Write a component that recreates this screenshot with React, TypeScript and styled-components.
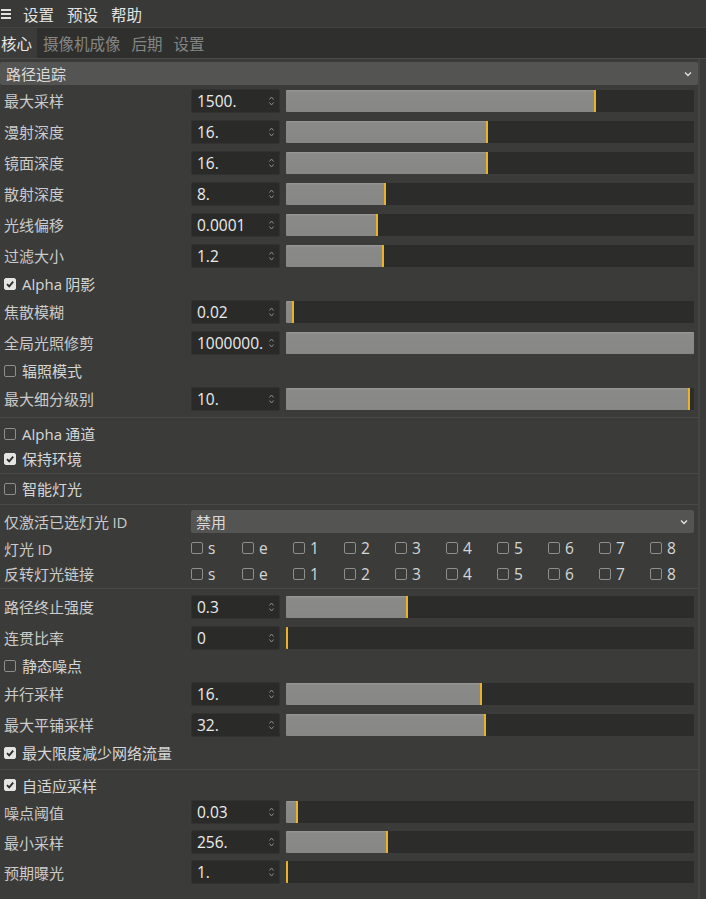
import React from 'react';
import styled, {createGlobalStyle} from 'styled-components';

const GlobalStyle = createGlobalStyle`
    html, body {
        margin: 0;
        padding: 0;
        background: #3b3c3a;
    }
    body {
        font-family: "Noto Sans CJK SC", "Noto Sans", sans-serif;
        color: #d2d2d2;
    }
`

const Page = styled.div`
    width: 706px;
    height: 899px;
    overflow: hidden;
    background: #3b3c3a;
`

const MenuBar = styled.div`
    height: 27px;
    display: flex;
    align-items: center;
    gap: 13px;
    padding-left: 1px;
    background: #393a38;
    font-size: 15.5px;
    color: #e2e2e2;
`

const Burger = styled.span`
    display: flex;
    flex-direction: column;
    gap: 2px;
    width: 10px;
    margin-right: -1px;
    & > i {
        display: block;
        height: 2px;
        background: #e2e2e2;
    }
`

const TabBar = styled.div`
    height: 30px;
    display: flex;
    align-items: stretch;
    background: #2f302e;
    border-top: 1px solid #444543;
    border-bottom: 1px solid #4b4c4a;
`

const Tab = styled.div<{ $active?: boolean }>`
    display: flex;
    align-items: center;
    padding: 0 5px 0 ${p => p.$active ? '1px' : '6px'};
    font-size: 15.5px;
    color: ${p => p.$active ? '#e8e8e8' : '#858684'};
    background: ${p => p.$active ? '#3b3c3a' : 'transparent'};
`

const Panel = styled.div`
    padding: 3px 0 0 0;
    margin-right: 6px;
    border-right: 2px solid #454644;
    height: 840px;
`

const Row = styled.div<{ $h?: number }>`
    display: grid;
    grid-template-columns: 185px 89px 1fr;
    column-gap: 6px;
    align-items: center;
    height: ${p => p.$h || 31}px;
    padding-right: 4px;
`

const Label = styled.div`
    padding-left: 4px;
    font-size: 15px;
    color: #cbcbcb;
    white-space: nowrap;
`

const Field = styled.div`
    height: 24px;
    display: flex;
    align-items: center;
    justify-content: space-between;
    background: #2a2b29;
    border: 1px solid #323331;
    border-radius: 2px;
    box-sizing: border-box;
    padding: 0 4px 0 5px;
    font-family: "Open Sans", "Noto Sans", sans-serif;
    font-size: 15.5px;
    color: #ececec;
`

const Spin = styled.svg`
    width: 7px;
    height: 12px;
    flex: none;
`

const Track = styled.div`
    height: 22px;
    background: #2c2d2b;
    border-radius: 1px;
    overflow: hidden;
    display: flex;
`

const Fill = styled.div<{ $mark: boolean }>`
    height: 100%;
    background: linear-gradient(#9a9a9a 0, #8a8a89 2px, #878786 100%);
    border-right: ${p => p.$mark ? '2px solid #e8b326' : 'none'};
    box-sizing: border-box;
`

const Sep = styled.div<{ $h?: number }>`
    height: ${p => p.$h || 7}px;
    display: flex;
    align-items: center;
    &::after {
        content: "";
        flex: 1;
        height: 1px;
        background: #4a4b49;
    }
`

const CheckRow = styled.div<{ $h?: number }>`
    height: ${p => p.$h || 25}px;
    display: flex;
    align-items: center;
    gap: 6px;
    padding-left: 4px;
    font-size: 15px;
    color: #d6d6d6;
`

const Box = styled.span<{ $on?: boolean }>`
    width: 12px;
    height: 12px;
    box-sizing: border-box;
    border-radius: 2px;
    flex: none;
    border: 1px solid ${p => p.$on ? '#e4e4e4' : '#8e8e8d'};
    background: ${p => p.$on ? '#e4e4e4' : 'transparent'};
    display: flex;
    align-items: center;
    justify-content: center;
`

const Latin = styled.span`
    font-family: "Open Sans", "Noto Sans", sans-serif;
`

const Select = styled.div<{ $full?: boolean }>`
    height: 23px;
    display: flex;
    align-items: center;
    justify-content: space-between;
    background: #545553;
    border-radius: 2px;
    padding: 0 6px 0 ${p => p.$full ? '6px' : '5px'};
    font-size: 15px;
    color: #dadada;
`

const SelectRow = styled.div<{ $h?: number }>`
    display: grid;
    grid-template-columns: 191px 1fr;
    align-items: center;
    height: ${p => p.$h || 26}px;
    padding-right: 4px;
`

const IdGrid = styled.div`
    display: grid;
    grid-template-columns: repeat(10, 51px);
    font-family: "Open Sans", "Noto Sans", sans-serif;
    font-size: 15.5px;
    color: #d6d6d6;
`

const IdItem = styled.div`
    display: flex;
    align-items: center;
    gap: 5px;
`

const Chevron = () => (
    <svg width="8" height="6" viewBox="0 0 8 6">
        <path d="M1 1.5 L4 4.5 L7 1.5" fill="none" stroke="#e0e0e0" strokeWidth="1.4"/>
    </svg>
)

const Tick = () => (
    <svg width="10" height="10" viewBox="0 0 10 10">
        <path d="M2 5.2 L4.2 7.4 L8.2 2.6" fill="none" stroke="#2b2c2a" strokeWidth="1.8"/>
    </svg>
)

const Slider = ({label, value, pct, mark = true, h}: {
    label: string, value: string, pct: number, mark?: boolean, h?: number
}) => (
    <Row $h={h}>
        <Label>{label}</Label>
        <Field>
            {value}
            <Spin viewBox="0 0 7 12">
                <path d="M1.5 4.5 L3.5 2 L5.5 4.5 M1.5 7.5 L3.5 10 L5.5 7.5" fill="none" stroke="#8d8d8c"
                      strokeWidth="1"/>
            </Spin>
        </Field>
        <Track>
            <Fill $mark={mark} style={{width: `${pct}%`}}/>
        </Track>
    </Row>
)

const Check = ({on, children, h}: { on?: boolean, children: React.ReactNode, h?: number }) => (
    <CheckRow $h={h}>
        <Box $on={on}>{on && <Tick/>}</Box>
        <span>{children}</span>
    </CheckRow>
)

const ids = ['s', 'e', '1', '2', '3', '4', '5', '6', '7', '8'];

const IdRow = ({label, h}: { label: React.ReactNode, h?: number }) => (
    <SelectRow $h={h}>
        <Label>{label}</Label>
        <IdGrid>
            {ids.map(id => (
                <IdItem key={id}><Box/>{id}</IdItem>
            ))}
        </IdGrid>
    </SelectRow>
)

export default function App() {
    return (
        <Page>
            <GlobalStyle/>
            <MenuBar>
                <Burger><i/><i/><i/></Burger>
                <span>设置</span>
                <span>预设</span>
                <span>帮助</span>
            </MenuBar>
            <TabBar>
                <Tab $active>核心</Tab>
                <Tab>摄像机成像</Tab>
                <Tab>后期</Tab>
                <Tab>设置</Tab>
            </TabBar>
            <Panel>
                <Select $full>路径追踪<Chevron/></Select>
                <Slider label="最大采样" value="1500." pct={76}/>
                <Slider label="漫射深度" value="16." pct={49.5}/>
                <Slider label="镜面深度" value="16." pct={49.5}/>
                <Slider label="散射深度" value="8." pct={24.5}/>
                <Slider label="光线偏移" value="0.0001" pct={22.5}/>
                <Slider label="过滤大小" value="1.2" pct={24}/>
                <Check on><Latin>Alpha</Latin> 阴影</Check>
                <Slider label="焦散模糊" value="0.02" pct={2}/>
                <Slider label="全局光照修剪" value="1000000." pct={100} mark={false}/>
                <Check>辐照模式</Check>
                <Slider label="最大细分级别" value="10." pct={99}/>
                <Sep/>
                <Check><Latin>Alpha</Latin> 通道</Check>
                <Check on>保持环境</Check>
                <Sep $h={5}/>
                <Check>智能灯光</Check>
                <Sep/>
                <SelectRow $h={27}>
                    <Label>仅激活已选灯光 <Latin>ID</Latin></Label>
                    <Select>禁用<Chevron/></Select>
                </SelectRow>
                <IdRow h={26} label={<>灯光 <Latin>ID</Latin></>}/>
                <IdRow h={25} label="反转灯光链接"/>
                <Sep $h={5}/>
                <Slider label="路径终止强度" value="0.3" pct={30}/>
                <Slider label="连贯比率" value="0" pct={0.5}/>
                <Check>静态噪点</Check>
                <Slider label="并行采样" value="16." pct={48}/>
                <Slider label="最大平铺采样" value="32." pct={49}/>
                <Check on>最大限度减少网络流量</Check>
                <Sep $h={8}/>
                <Check on h={24}>自适应采样</Check>
                <Slider label="噪点阈值" value="0.03" pct={3} h={30}/>
                <Slider label="最小采样" value="256." pct={25} h={30}/>
                <Slider label="预期曝光" value="1." pct={0.5} h={30}/>
            </Panel>
        </Page>
    );
}
